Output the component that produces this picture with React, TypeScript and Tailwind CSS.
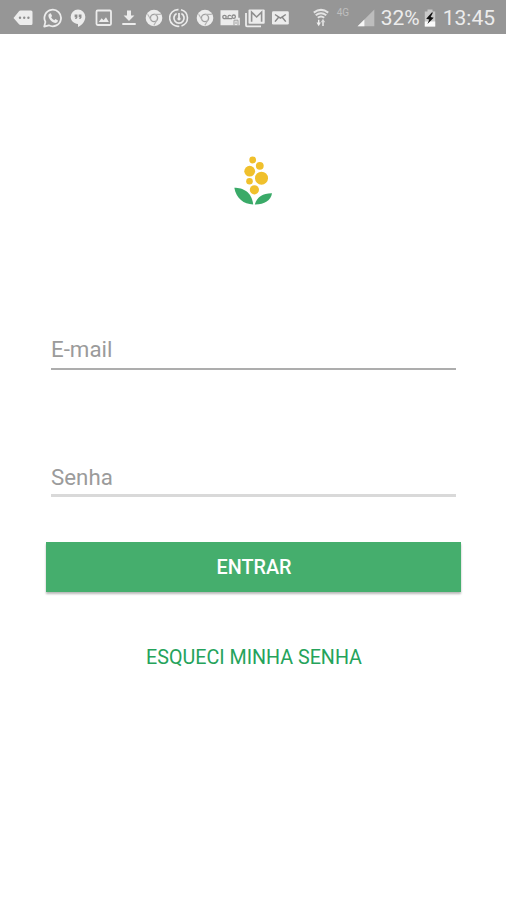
import React, { useState } from "react";

//Status bar glyphs share a 20x20 box
const StatusIcon = ({ children }: { children: React.ReactNode }) => {
  return (
    <svg
      viewBox="0 0 20 20"
      className="h-5 w-5 shrink-0"
      fill="none"
      stroke="none"
      aria-hidden="true"
    >
      {children}
    </svg>
  );
};

const MoreIcon = () => (
  <StatusIcon>
    <path d="M0.5 10 6 3.2Q6.6 2.5 7.5 2.5H18Q19.5 2.5 19.5 4V15.5Q19.5 17 18 17H7.5Q6.6 17 6 16.3Z" fill="#ececec" />
    <circle cx="7" cy="9.8" r="1.2" fill="#8f8f8f" />
    <circle cx="11.2" cy="9.8" r="1.2" fill="#8f8f8f" />
    <circle cx="15.4" cy="9.8" r="1.2" fill="#8f8f8f" />
  </StatusIcon>
);

const WhatsappIcon = () => (
  <StatusIcon>
    <path d="M1.2 18.6 2.4 13.9A8.3 8.3 0 1 1 5.8 17.3Z" stroke="#ececec" strokeWidth="1.8" strokeLinejoin="round" />
    <path d="M6.3 5.7 7.8 5.3 9.1 8.1 8.1 9.3Q9.2 11.4 11.3 12.2L12.4 11.1 15 12.4Q14.9 14.8 12.6 14.9C9.3 14.9 5.4 11 5.4 7.6Q5.4 6.4 6.3 5.7Z" fill="#ececec" />
  </StatusIcon>
);

const HangoutsIcon = () => (
  <StatusIcon>
    <path d="M10 1.5A7.3 7.3 0 0 0 2.7 8.8C2.7 12.8 5.8 15.8 10 15.9V19C14 17.1 17.3 13.6 17.3 8.8A7.3 7.3 0 0 0 10 1.5Z" fill="#ececec" />
    <path d="M6.6 6.5h2.8v3.2L8.2 11H7l.8-1.8H6.6ZM10.7 6.5h2.8v3.2L12.3 11h-1.2l.8-1.8h-1.2Z" fill="#8f8f8f" />
  </StatusIcon>
);

const PictureIcon = () => (
  <StatusIcon>
    <rect x="2.5" y="2.5" width="14.5" height="14.5" rx="1.2" stroke="#ececec" strokeWidth="1.8" />
    <path d="M4.8 14 7.6 10.3 9.6 12.2 12 9.3 14.8 14Z" fill="#ececec" />
  </StatusIcon>
);

const DownloadIcon = () => (
  <StatusIcon>
    <path d="M8 2.5h4v5h3.4L10 13 4.6 7.5H8ZM3.3 15h13.4v2H3.3Z" fill="#ececec" />
  </StatusIcon>
);

const ChromeIcon = () => (
  <StatusIcon>
    <circle cx="10" cy="10" r="8.3" fill="#ececec" />
    <circle cx="10" cy="10" r="3.6" stroke="#a0a0a0" strokeWidth="1.4" />
    <path d="M10 6.4h6.8M6.9 11.8 3.6 6.2M13.1 11.8 9.8 17.4" stroke="#b4b4b4" strokeWidth="1.1" />
  </StatusIcon>
);

const SyncIcon = () => (
  <StatusIcon>
    <path d="M12 1.7A8.4 8.4 0 0 1 12.5 17.9M10.3 18.3A8.4 8.4 0 1 1 9.5 1.6" stroke="#ececec" strokeWidth="1.6" />
    <path d="M7.6 5.5A5.1 5.1 0 1 0 12.4 5.5" stroke="#ececec" strokeWidth="1.7" />
    <path d="M10 5v5" stroke="#ececec" strokeWidth="1.8" />
    <circle cx="10" cy="10.8" r="1.6" fill="#ececec" />
  </StatusIcon>
);

const VoicemailIcon = () => (
  <StatusIcon>
    <path d="M0.5 2.3H18.3V9.8H19.8V17.3H0.5Z" fill="#ececec" />
    <circle cx="4.5" cy="9" r="1.7" stroke="#8c8c8c" strokeWidth="1.3" />
    <path d="M4.5 10.7H12M8 10.7V8.3Q9.4 6.5 11 7.9" stroke="#8c8c8c" strokeWidth="1.2" />
    <circle cx="13.7" cy="8.7" r="1.7" stroke="#8c8c8c" strokeWidth="1.3" />
    <path d="M14 17.3V12.2H18V17.3M16 13.5V16" stroke="#a0a0a0" strokeWidth="1" />
  </StatusIcon>
);

const MailStackIcon = () => (
  <StatusIcon>
    <path d="M1 5V17.3Q1 18.3 2 18.3H16" stroke="#ececec" strokeWidth="1.8" />
    <rect x="3.5" y="1.5" width="16.2" height="14.2" rx="1" fill="#ececec" />
    <path d="M6.6 13.8V4.2L11.6 9 16.6 4.2V13.8" stroke="#8f8f8f" strokeWidth="1.6" />
  </StatusIcon>
);

const EnvelopeIcon = () => (
  <StatusIcon>
    <rect x="1" y="3.3" width="16.8" height="13.3" rx="1.3" fill="#ececec" />
    <path d="M4 6.5 9.4 10.2 14.8 6.5M4 13.6 7.6 9.2M14.8 13.6 11.2 9.2" stroke="#888" strokeWidth="1.5" />
  </StatusIcon>
);

const WifiIcon = () => (
  <svg viewBox="0 0 18 20" className="ml-auto h-5 w-[18px] shrink-0" fill="none">
    <path d="M1.8 4.6Q9 -0.8 16.2 4.6M3.7 7.3Q9 3.4 14.3 7.3M5.8 9.8Q9 7.2 12.2 9.8" stroke="#e4e4e4" strokeWidth="2" />
    <path d="M6.7 11.8v4.1M11 18v-5.4" stroke="#f0f0f0" strokeWidth="1.4" />
    <path d="M4.5 14.5h4.4L6.7 18.2Z" fill="#f0f0f0" />
    <path d="M8.8 14.2h4.4L11 10.7Z" fill="#dcdcdc" />
  </svg>
);

const SignalIcon = () => (
  <svg viewBox="0 0 18 18" className="ml-[7px] h-[18px] w-[18px] shrink-0">
    <path d="M17.3 0.6V17.3H0.6Z" fill="#bdbdbd" />
    <path d="M7.4 10.5V17.3H0.6Z" fill="#f7f7f7" />
  </svg>
);

const BatteryIcon = () => (
  <svg viewBox="0 0 12 18" className="ml-[4px] h-[18px] w-3 shrink-0">
    <path d="M3.5 0.5h5v2h2.7v15H0.8v-15h2.7Z" fill="#c9c9c9" />
    <path d="M0.8 12.5h10.4v5H0.8Z" fill="#fafafa" />
    <path d="M7.8 3.6 2.2 9.8 5.3 10.5 3.4 15 9.7 8.7 6.6 7.9 9 3.6Z" fill="#111" />
  </svg>
);

const StatusBar = () => {
  return (
    <div className="flex h-[34px] items-center bg-[#969696] pl-[13px] pr-[11px] pt-px text-[#ececec]">
      <MoreIcon />
      <div className="ml-[10px] flex items-center gap-[5.3px]">
        <WhatsappIcon />
        <HangoutsIcon />
        <PictureIcon />
        <DownloadIcon />
        <ChromeIcon />
        <SyncIcon />
        <ChromeIcon />
        <VoicemailIcon />
        <MailStackIcon />
        <EnvelopeIcon />
      </div>
      <WifiIcon />
      <span className="mb-2.5 ml-[7px] w-[13px] text-[10px] leading-none text-[#bebebe]">
        4G
      </span>
      <SignalIcon />
      <span className="ml-[6px] pt-0.5 text-[21px] leading-none">32%</span>
      <BatteryIcon />
      <span className="ml-[7px] pt-0.5 text-[21px] leading-none">13:45</span>
    </div>
  );
};

const FlowerLogo = () => (
  <svg viewBox="0 0 38 50" className="mr-px h-[50px] w-[38px]">
    <g fill="#f0c02c">
      <circle cx="18.7" cy="4" r="3.4" />
      <circle cx="25.8" cy="9.8" r="3.9" />
      <circle cx="15.7" cy="15.2" r="5.4" />
      <circle cx="27.5" cy="22.2" r="6.5" />
      <circle cx="15.5" cy="25.2" r="3.3" />
      <circle cx="20.4" cy="33.8" r="4.6" />
    </g>
    <path d="M0.3 31.8C9 32 17.5 35.5 19.2 48.5C9.5 48 2.5 43 0.3 31.8Z" fill="#3aaa68" />
    <path d="M38 37.2C37 44.5 30 48.7 20.8 48.5C23 40.5 29.5 37 38 37.2Z" fill="#3aaa68" />
  </svg>
);

const App = () => {
  const [email, setEmail] = useState<string>("");
  const [password, setPassword] = useState<string>("");

  return (
    <div className="min-h-screen bg-white font-['Roboto',sans-serif]">
      <StatusBar />
      <form
        className="flex flex-col items-center pl-[46px] pr-[45px] pt-[122px]"
        onSubmit={(e) => e.preventDefault()}
      >
        <FlowerLogo />
        <div className="mt-[126px] w-full pl-[5px] pr-[5px]">
          <input
            type="email"
            placeholder="E-mail"
            value={email}
            onChange={(e) => setEmail(e.target.value)}
            className="block h-[38px] w-full border-b-2 border-[#adadad] pb-0.5 text-[22.3px] text-gray-800 outline-none placeholder:text-[#9b9b9b]"
          />
          <input
            type="password"
            placeholder="Senha"
            value={password}
            onChange={(e) => setPassword(e.target.value)}
            className="mt-[87px] block h-[40px] w-full border-b-3 border-[#d9d9d9] pt-[3px] text-[22.3px] text-gray-800 outline-none placeholder:text-[#9b9b9b]"
          />
        </div>
        <button
          type="submit"
          className="mt-[45px] h-[50px] w-[415px] bg-[#45ae6d] pl-px pt-0.5 text-[19.8px] font-medium text-white shadow-[0_2px_2px_rgba(0,0,0,0.28)]"
        >
          ENTRAR
        </button>
        <a href="#" className="mt-[54px] pl-px text-[19.7px] leading-6 text-[#25a35b]">
          ESQUECI MINHA SENHA
        </a>
      </form>
    </div>
  );
};

export default App;
